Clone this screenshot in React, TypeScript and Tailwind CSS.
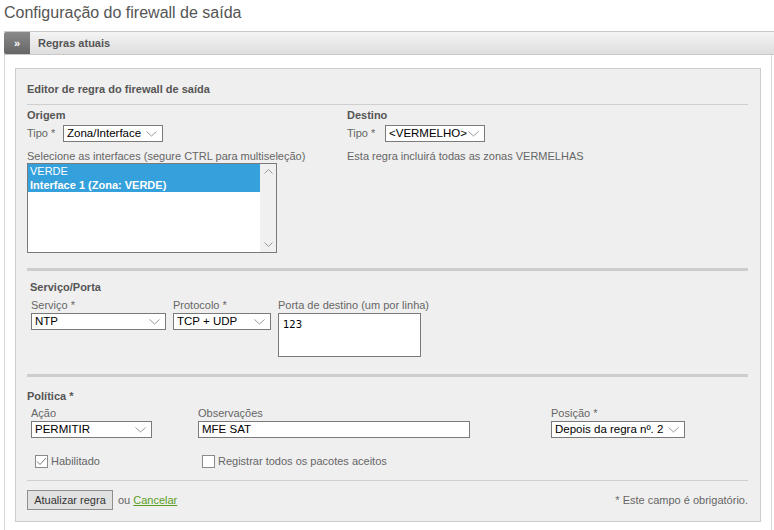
import React from 'react';

const Chevron: React.FC = () => (
  <svg width="11" height="6" viewBox="0 0 11 6" className="shrink-0">
    <path d="M0.5 0.5 L5.5 5 L10.5 0.5" fill="none" stroke="#999" strokeWidth="1" />
  </svg>
);

type SelectBoxProps = { value: string; className?: string };

const SelectBox: React.FC<SelectBoxProps> = ({ value, className = '' }) => (
  <div
    className={`flex h-[17px] items-center justify-between border border-[#7a7a7a] bg-white pl-[3px] pr-[5px] text-[11.5px] leading-none text-black ${className}`}
  >
    <span className="whitespace-nowrap">{value}</span>
    <Chevron />
  </div>
);

const Checkbox: React.FC<{ checked?: boolean }> = ({ checked }) => (
  <span className="flex h-[13px] w-[13px] shrink-0 items-center justify-center border border-[#8a8a8a] bg-white">
    {checked && (
      <svg width="11" height="9" viewBox="0 0 11 9">
        <path d="M1 4.5 L4 7.5 L10 1" fill="none" stroke="#777" strokeWidth="1" />
      </svg>
    )}
  </span>
);

/**
 * Editor de regra do firewall de saída
 */
const App: React.FC = () => {
  return (
    <div className="h-[530px] w-[774px] overflow-hidden bg-white font-['Liberation_Sans',Arial,sans-serif] text-[11px] text-[#666]">
      <h1 className="pl-[4px] pt-[3px] text-[16px] leading-[20px] text-[#555]">
        Configuração do firewall de saída
      </h1>

      {/* barra "Regras atuais" */}
      <div className="ml-[4px] mt-[8px] flex h-[24px] border-y border-[#c8c8c8] bg-gradient-to-b from-[#f4f4f4] to-[#dedede]">
        <div className="flex w-[26px] items-center justify-center rounded-l-[2px] bg-gradient-to-b from-[#8a8a8a] to-[#666] text-[11px] font-bold text-white">
          »
        </div>
        <div className="flex items-center pl-[8px] text-[11px] font-bold text-[#555]">Regras atuais</div>
      </div>

      <div className="ml-[4px] mr-[2px] h-[480px] border-x border-[#d6d6d6] px-[10px] pt-[13px]">
        <div className="border border-[#cdcdcd] bg-[#efefef] pb-[11px] pl-[11px] pr-[12px] pt-[13px]">
          <div className="border-b border-[#cfcfcf] pb-[8px] font-bold leading-[14px] text-[#555]">
            Editor de regra do firewall de saída
          </div>

          {/* Origem / Destino */}
          <div className="flex pt-[3px]">
            <div className="w-[320px]">
              <div className="font-bold leading-[14px] text-[#555]">Origem</div>
              <div className="mt-[3px] flex items-center">
                <span className="w-[36px]">Tipo *</span>
                <SelectBox value="Zona/Interface" className="w-[100px]" />
              </div>
              <div className="mt-[7px] leading-[14px]">Selecione as interfaces (segure CTRL para multiseleção)</div>
              <div className="flex h-[90px] w-[250px] border border-[#7a7a7a] bg-white">
                <div className="flex-1 leading-[14px] text-white">
                  <div className="bg-[#34a0dc] pl-[2px]">VERDE</div>
                  <div className="bg-[#34a0dc] pl-[2px] font-bold">Interface 1 (Zona: VERDE)</div>
                </div>
                <div className="flex w-[16px] flex-col items-center justify-between bg-[#f0f0f0] py-[5px]">
                  <svg width="9" height="5" viewBox="0 0 9 5">
                    <path d="M0.5 4.5 L4.5 0.5 L8.5 4.5" fill="none" stroke="#999" />
                  </svg>
                  <svg width="9" height="5" viewBox="0 0 9 5">
                    <path d="M0.5 0.5 L4.5 4.5 L8.5 0.5" fill="none" stroke="#999" />
                  </svg>
                </div>
              </div>
            </div>
            <div>
              <div className="font-bold leading-[14px] text-[#555]">Destino</div>
              <div className="mt-[3px] flex items-center">
                <span className="w-[38px]">Tipo *</span>
                <SelectBox value="<VERMELHO>" className="w-[100px]" />
              </div>
              <div className="mt-[7px] leading-[14px]">Esta regra incluirá todas as zonas VERMELHAS</div>
            </div>
          </div>

          <div className="mt-[15px] h-[3px] bg-[#cdcdcd]" />

          {/* Serviço/Porta */}
          <div className="pl-[3px] pt-[9px]">
            <div className="font-bold leading-[14px] text-[#555]">Serviço/Porta</div>
            <div className="mt-[4px] flex pl-[1px]">
              <div className="w-[142px]">
                <div className="leading-[15px]">Serviço *</div>
                <SelectBox value="NTP" className="w-[135px]" />
              </div>
              <div className="w-[105px]">
                <div className="leading-[15px]">Protocolo *</div>
                <SelectBox value="TCP + UDP" className="w-[98px]" />
              </div>
              <div>
                <div className="leading-[15px]">Porta de destino (um por linha)</div>
                <div className="h-[44px] w-[143px] border border-[#7a7a7a] bg-white px-[4px] pt-[3px] font-['DejaVu_Sans',sans-serif] text-[10px] text-black">
                  123
                </div>
              </div>
            </div>
          </div>

          <div className="mt-[17px] h-[3px] bg-[#cdcdcd]" />

          {/* Política */}
          <div className="pt-[12px]">
            <div className="font-bold leading-[14px] text-[#555]">Política *</div>
            <div className="mt-[3px] flex pl-[4px]">
              <div className="w-[167px]">
                <div className="leading-[15px]">Ação</div>
                <SelectBox value="PERMITIR" className="w-[121px]" />
              </div>
              <div className="w-[353px]">
                <div className="leading-[15px]">Observações</div>
                <div className="flex h-[17px] w-[272px] items-center border border-[#7a7a7a] bg-white pl-[3px] text-[11.5px] text-black">
                  MFE SAT
                </div>
              </div>
              <div>
                <div className="leading-[15px]">Posição *</div>
                <SelectBox value="Depois da regra nº. 2" className="w-[134px]" />
              </div>
            </div>
            <div className="mt-[16px] flex items-center pl-[8px] leading-[14px]">
              <label className="flex w-[167px] items-center gap-[3px]">
                <Checkbox checked />
                <span>Habilitado</span>
              </label>
              <label className="flex items-center gap-[3px]">
                <Checkbox />
                <span>Registrar todos os pacotes aceitos</span>
              </label>
            </div>
          </div>

          <div className="mt-[12px] border-t border-[#cfcfcf]" />

          <div className="mt-[9px] flex items-center justify-between">
            <div className="flex items-center">
              <button className="h-[20px] w-[86px] border border-[#8f8f8f] bg-[#e1e1e1] text-[11px] text-[#333]">
                Atualizar regra
              </button>
              <span className="ml-[5px]">ou</span>
              <a href="#" className="ml-[3px] text-[#5a9e1e] underline">
                Cancelar
              </a>
            </div>
            <span>* Este campo é obrigatório.</span>
          </div>
        </div>
      </div>
    </div>
  );
};

export default App;
